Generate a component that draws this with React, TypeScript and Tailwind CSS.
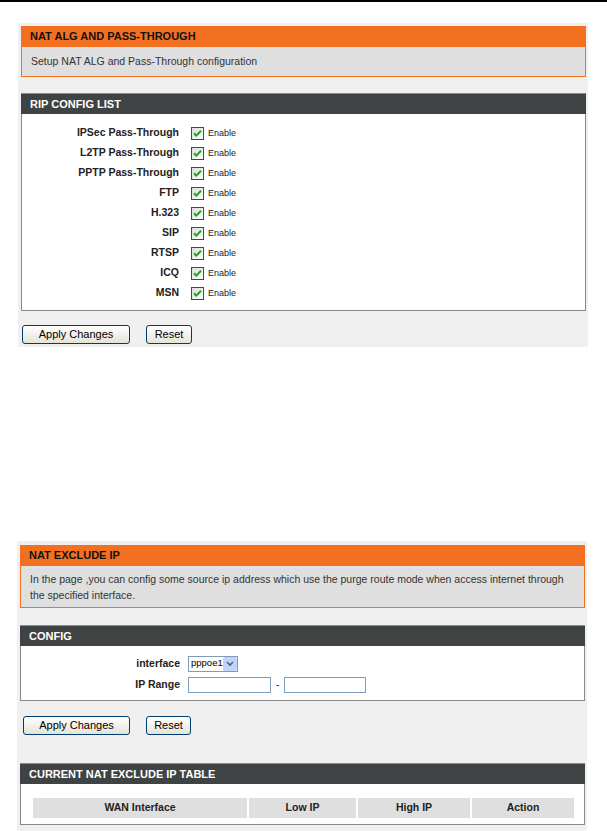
import React from "react";

const ripRows = [
  "IPSec Pass-Through",
  "L2TP Pass-Through",
  "PPTP Pass-Through",
  "FTP",
  "H.323",
  "SIP",
  "RTSP",
  "ICQ",
  "MSN",
];

function CheckBox() {
  return (
    <svg width="13" height="13" viewBox="0 0 13 13" className="shrink-0">
      <defs>
        <linearGradient id="cbg" x1="0" y1="0" x2="1" y2="1">
          <stop offset="0" stopColor="#dcdcd7" />
          <stop offset="1" stopColor="#ffffff" />
        </linearGradient>
      </defs>
      <rect x="0.5" y="0.5" width="12" height="12" fill="url(#cbg)" stroke="#1c5180" />
      <path d="M3 6.2 L5.3 8.6 L10 3.8" fill="none" stroke="#21a121" strokeWidth="2" />
    </svg>
  );
}

function XpButton({ label, w }: { label: string; w: string }) {
  return (
    <button
      className={`${w} h-[19px] rounded-[3px] border border-[#003c74] bg-gradient-to-b from-white to-[#e6e3d6] text-[11px] leading-none text-black`}
    >
      {label}
    </button>
  );
}

function OrangeHead({ title, children }: { title: string; children: React.ReactNode }) {
  return (
    <div>
      <div className="flex h-[21px] items-center bg-[#f37021] pl-[9px] text-[11px] font-bold text-[#111]">
        {title}
      </div>
      <div className="border border-t-0 border-[#f37021] bg-[#dfdfdf] px-[9px] text-[10.5px] text-[#333]">
        {children}
      </div>
    </div>
  );
}

function DarkHead({ title }: { title: string }) {
  return (
    <div className="flex h-[21px] items-center border-t border-[#8c8c8c] bg-[#404343] pl-[9px] text-[11px] font-bold text-white">
      {title}
    </div>
  );
}

export default function App() {
  return (
    <div className="min-h-[831px] bg-white font-['Liberation_Sans',Arial,sans-serif]">
      <div className="h-[2px] bg-black" />

      {/* NAT ALG */}
      <div className="ml-[18px] mt-[21px] w-[570px] bg-[#f0f0f0] pb-[3px] pl-[3px] pr-[2px] pt-[3px]">
        <OrangeHead title="NAT ALG AND PASS-THROUGH">
          <div className="flex h-[29px] items-center">Setup NAT ALG and Pass-Through configuration</div>
        </OrangeHead>

        <div className="mt-[16px]">
          <DarkHead title="RIP CONFIG LIST" />
          <div className="border border-t-0 border-[#888] bg-white pb-[7px] pt-[9px]">
            {ripRows.map((r) => (
              <div key={r} className="flex h-[20px] items-center">
                <div className="w-[157px] text-right text-[10.5px] font-bold text-[#222]">{r}</div>
                <div className="ml-[12px] flex items-center gap-[4px]">
                  <CheckBox />
                  <span className="mt-[1px] text-[9px] text-[#222]">Enable</span>
                </div>
              </div>
            ))}
          </div>
        </div>

        <div className="mt-[14px] flex gap-[16px] pl-[1px]">
          <XpButton label="Apply Changes" w="w-[108px]" />
          <XpButton label="Reset" w="w-[46px]" />
        </div>
      </div>

      {/* NAT EXCLUDE IP */}
      <div className="ml-[17px] mt-[194px] w-[570px] bg-[#f0f0f0] pb-[6px] pl-[3px] pr-[2px] pt-[4px]">
        <OrangeHead title="NAT EXCLUDE IP">
          <div className="pb-[4px] pt-[5px] leading-[16px]">
            In the page ,you can config some source ip address which use the purge route mode when access internet through
            the specified interface.
          </div>
        </OrangeHead>

        <div className="mt-[17px]">
          <DarkHead title="CONFIG" />
          <div className="border border-t-0 border-[#888] bg-white pb-[6px] pt-[8px]">
            <div className="flex h-[19px] items-center">
              <div className="w-[159px] text-right text-[10.5px] font-bold text-[#222]">interface</div>
              <div className="ml-[8px] flex h-[16px] w-[50px] items-center border border-[#7f9db9] bg-white">
                <span className="flex-1 pl-[2px] text-[9.5px] text-black">pppoe1</span>
                <span className="flex h-[14px] w-[14px] items-center justify-center rounded-[2px] bg-[#c1d3fb]">
                  <svg width="8" height="6" viewBox="0 0 8 6">
                    <path d="M1 1 L4 4 L7 1" fill="none" stroke="#4d6185" strokeWidth="1.6" />
                  </svg>
                </span>
              </div>
            </div>
            <div className="mt-[2px] flex h-[19px] items-center">
              <div className="w-[159px] text-right text-[10.5px] font-bold text-[#222]">IP Range</div>
              <div className="ml-[8px] h-[16px] w-[83px] border border-[#7f9db9] bg-white" />
              <span className="mx-[5px] text-[10px] text-[#222]">-</span>
              <div className="h-[16px] w-[82px] border border-[#7f9db9] bg-white" />
            </div>
          </div>
        </div>

        <div className="mt-[15px] flex gap-[16px] pl-[3px]">
          <XpButton label="Apply Changes" w="w-[107px]" />
          <XpButton label="Reset" w="w-[45px]" />
        </div>

        <div className="mt-[28px]">
          <DarkHead title="CURRENT NAT EXCLUDE IP TABLE" />
          <div className="border border-t-0 border-[#888] bg-white pb-[6px] pl-[12px] pr-[10px] pt-[14px]">
            <div className="grid grid-cols-[214px_107px_112px_1fr] gap-[2px]">
              {["WAN Interface", "Low IP", "High IP", "Action"].map((h) => (
                <div
                  key={h}
                  className="flex h-[20px] items-center justify-center bg-[#dfdfdf] text-[10.5px] font-bold text-[#222]"
                >
                  {h}
                </div>
              ))}
            </div>
          </div>
        </div>
      </div>
    </div>
  );
}
